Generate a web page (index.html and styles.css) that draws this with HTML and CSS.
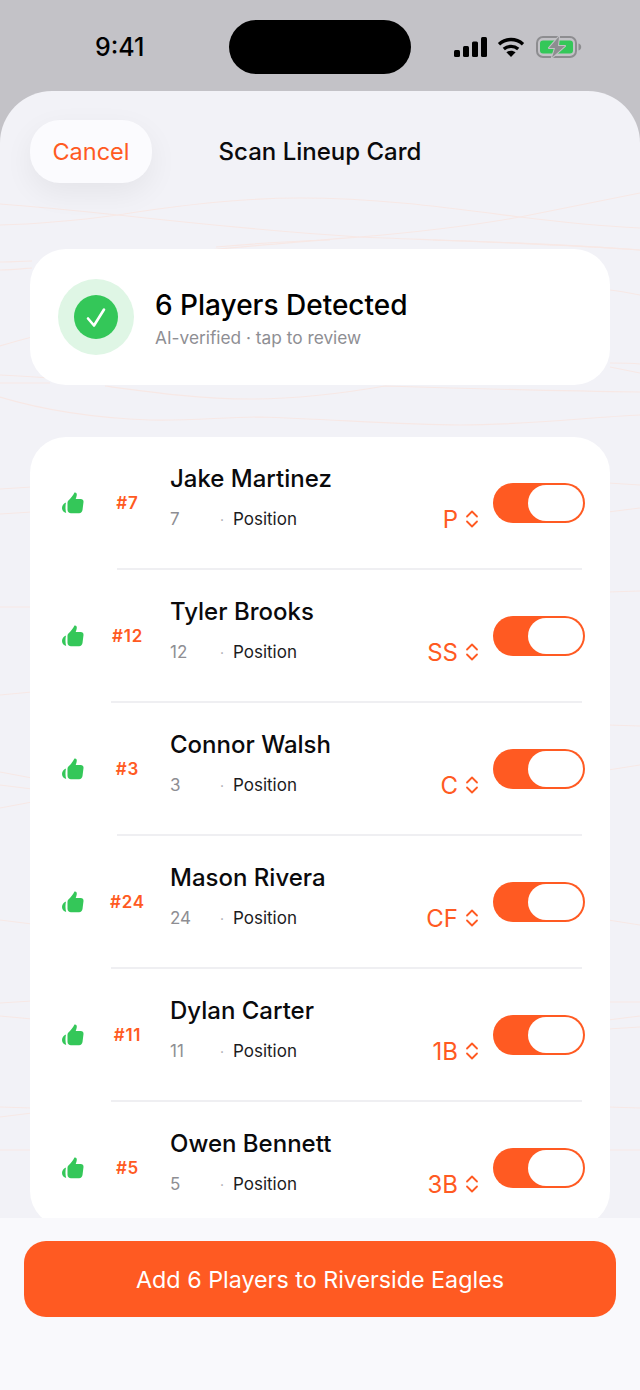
FILE: index.html
```html
<!DOCTYPE html>
<html lang="en">
<head>
<meta charset="utf-8">
<title>Scan Lineup Card</title>
<link rel="stylesheet" href="styles.css">
</head>
<body>
<svg width="0" height="0" class="defs">
  <defs>
    <symbol id="thumb" viewBox="0 0 22 22">
      <path fill="#34c759" d="M12.500.5c1.300-.4 2.300.6 2.300 2 0 1.600-.6 3.200-1.100 4.500h5c1.800 0 3 1.200 2.800 3l-1 8c-.3 2-1.500 3.200-3.400 3.200H9c-2 0-3.500-1.500-3.500-3.500v-7c0-1 .3-1.600.9-2.300C8.800 6.500 11 3.500 12.500.5z"/>
      <path fill="#34c759" d="M4 10.500C1 11.500 0 14 0 16c0 2.500 1.700 4.500 4.200 5C3.300 18 3.300 13.500 4 10.500z"/>
    </symbol>
    <symbol id="chev" viewBox="0 0 14 18">
      <path fill="none" stroke="#ff5a22" stroke-width="1.800" stroke-linecap="round" stroke-linejoin="round" d="M2 6.500 7 1.500l5 5M2 11.500l5 5 5-5"/>
    </symbol>
  </defs>
</svg>
<div class="status">
  <span class="time">9:41</span>
  <div class="island"></div>
  <div class="status-icons">
    <svg class="signal" width="33" height="20" viewBox="0 0 33 20">
      <rect x="0" y="13" width="6" height="7" rx="1.500"/>
      <rect x="9" y="9" width="6" height="11" rx="1.500"/>
      <rect x="18" y="4.500" width="6" height="15.500" rx="1.500"/>
      <rect x="27" y="0" width="6" height="20" rx="1.500"/>
    </svg>
    <svg class="wifi" width="28" height="20" viewBox="0 0 28 20">
      <path fill="none" stroke="#000" stroke-width="3.400" d="M2 7.200C9 1 19 1 26 7.200M6.800 12C11 8.500 17 8.500 21.200 12"/>
      <path d="M14 20l-4.600-4.800c2.700-2.100 6.500-2.100 9.200 0z"/>
    </svg>
    <svg class="battery" width="46" height="22" viewBox="0 0 46 22">
      <rect x="1" y="1" width="39" height="20" rx="6" fill="none" stroke="#8d8d90" stroke-width="2"/>
      <rect x="4" y="4.500" width="33" height="13" rx="3" fill="#34c759"/>
      <path d="M42.500 7.500c1.800.5 2.700 1.800 2.700 3.500s-.9 3-2.700 3.500z" fill="#8d8d90"/>
      <path d="M23 .5 13 12h6L16 21.500 29 10h-7z" fill="#8d8d90" stroke="#c3c2c7" stroke-width="2" stroke-linejoin="round" paint-order="stroke"/>
    </svg>
  </div>
</div>

<main class="sheet">
  <svg class="waves" width="640" height="1299" viewBox="0 91 640 1299" fill="none" stroke="#f7e8e5" stroke-width="1.200">
    <path d="M0 204C40 207 80 211 118 215C200 224 280 232 359 237C460 241 560 244 640 250"/>
    <path d="M0 225C40 224 80 220 118 215C180 205 240 198 300 198C380 198 450 208 520 217C560 222 600 226 640 228"/>
    <path d="M210 250C260 245 310 241 359 237C420 232 470 226 520 217C560 209 600 201 640 193"/>
    <path d="M216 247C250 244 290 241 330 240M433 240C500 242 570 245 640 250"/>
    <path d="M0 262C10 262 20 261 32 261M0 270C10 270 20 269 32 268"/>
    <path d="M0 346C10 343 20 340 32 337M610 290C620 291 630 293 640 295"/>
    <path d="M0 375C20 376 40 377 60 379M0 383C20 383 35 383 50 383"/>
    <path d="M610 363C620 363 630 363 640 364M610 367C620 369 630 371 640 373"/>
    <path d="M105 386C150 392 200 399 250 399C300 399 345 393 385 386C450 388 550 391 640 392"/>
    <path d="M0 397C50 412 100 418 150 420C190 421 225 417 260 417C330 419 400 425 460 425C530 425 590 417 640 415"/>
    <path d="M0 489L32 487M0 514L32 512M0 607L32 607M0 695L32 692M0 772L32 778M0 785L32 789M0 808L32 802M0 920L32 924M0 1003L32 1001M0 1016L32 1019M0 1107L32 1108M0 1117L32 1113M0 1150L32 1150"/>
    <path d="M608 483L640 485M608 512L640 508M608 592L640 591M608 725L640 726M608 770L640 765M608 920L640 925M608 1002L640 1002M608 1020L640 1016M608 1029L640 1027M608 1107L640 1108M608 1150L640 1150"/>
  </svg>

  <header class="nav">
    <div class="nav-side"><button class="cancel">Cancel</button></div>
    <h1 class="nav-title">Scan Lineup Card</h1>
    <div class="nav-side"></div>
  </header>

  <section class="summary">
    <div class="halo">
      <div class="check">
        <svg width="44" height="44" viewBox="0 0 44 44"><path fill="none" stroke="#fff" stroke-width="2.600" stroke-linecap="round" stroke-linejoin="round" d="M14 23.500l6 7 10-16"/></svg>
      </div>
    </div>
    <div class="summary-text">
      <div class="summary-title">6 Players Detected</div>
      <div class="summary-sub">AI-verified · tap to review</div>
    </div>
  </section>

  <section class="list">
    <div class="row">
      <svg class="thumb" width="22" height="22"><use href="#thumb"/></svg>
      <div class="jersey">#7</div>
      <div class="info">
        <div class="name">Jake Martinez</div>
        <div class="meta"><span class="num">7</span><span class="dot">·</span><span class="label">Position</span><span class="pos">P</span><svg class="chev" width="14" height="18"><use href="#chev"/></svg></div>
      </div>
      <div class="toggle"><div class="knob"></div></div>
    </div>
    <div class="divider one"></div>
    <div class="row">
      <svg class="thumb" width="22" height="22"><use href="#thumb"/></svg>
      <div class="jersey">#12</div>
      <div class="info">
        <div class="name">Tyler Brooks</div>
        <div class="meta"><span class="num">12</span><span class="dot">·</span><span class="label">Position</span><span class="pos">SS</span><svg class="chev" width="14" height="18"><use href="#chev"/></svg></div>
      </div>
      <div class="toggle"><div class="knob"></div></div>
    </div>
    <div class="divider two"></div>
    <div class="row">
      <svg class="thumb" width="22" height="22"><use href="#thumb"/></svg>
      <div class="jersey">#3</div>
      <div class="info">
        <div class="name">Connor Walsh</div>
        <div class="meta"><span class="num">3</span><span class="dot">·</span><span class="label">Position</span><span class="pos">C</span><svg class="chev" width="14" height="18"><use href="#chev"/></svg></div>
      </div>
      <div class="toggle"><div class="knob"></div></div>
    </div>
    <div class="divider one"></div>
    <div class="row">
      <svg class="thumb" width="22" height="22"><use href="#thumb"/></svg>
      <div class="jersey">#24</div>
      <div class="info">
        <div class="name">Mason Rivera</div>
        <div class="meta"><span class="num">24</span><span class="dot">·</span><span class="label">Position</span><span class="pos">CF</span><svg class="chev" width="14" height="18"><use href="#chev"/></svg></div>
      </div>
      <div class="toggle"><div class="knob"></div></div>
    </div>
    <div class="divider two"></div>
    <div class="row">
      <svg class="thumb" width="22" height="22"><use href="#thumb"/></svg>
      <div class="jersey">#11</div>
      <div class="info">
        <div class="name">Dylan Carter</div>
        <div class="meta"><span class="num">11</span><span class="dot">·</span><span class="label">Position</span><span class="pos">1B</span><svg class="chev" width="14" height="18"><use href="#chev"/></svg></div>
      </div>
      <div class="toggle"><div class="knob"></div></div>
    </div>
    <div class="divider two"></div>
    <div class="row">
      <svg class="thumb" width="22" height="22"><use href="#thumb"/></svg>
      <div class="jersey">#5</div>
      <div class="info">
        <div class="name">Owen Bennett</div>
        <div class="meta"><span class="num">5</span><span class="dot">·</span><span class="label">Position</span><span class="pos">3B</span><svg class="chev" width="14" height="18"><use href="#chev"/></svg></div>
      </div>
      <div class="toggle"><div class="knob"></div></div>
    </div>
  </section>

  <footer class="footer">
    <button class="add">Add 6 Players to Riverside Eagles</button>
  </footer>
</main>
</body>
</html>
```
FILE: styles.css
```css
* { box-sizing: border-box; }
html, body { margin: 0; padding: 0; }
body {
  width: 640px;
  height: 1390px;
  overflow: hidden;
  background: #c3c2c7;
  font-family: Inter, "Liberation Sans", sans-serif;
  color: #0a0a0c;
}
.defs { position: absolute; }

.status {
  height: 91px;
  display: flex;
  align-items: flex-start;
  padding: 20px 0 0 95px;
}
.time {
  width: 134px;
  height: 54px;
  line-height: 54px;
  font-size: 25px;
  font-weight: 500;
  color: #000;
}
.island { width: 182px; height: 54px; border-radius: 27px; background: #000; }
.status-icons {
  display: flex;
  align-items: center;
  height: 54px;
  margin-left: 43px;
  gap: 10px;
}
.wifi { margin-right: 1px; }

.sheet {
  position: relative;
  height: 1299px;
  overflow: hidden;
  border-radius: 52px 52px 0 0;
  background: #f2f2f7;
  padding: 29px 30px 0;
}
.waves { position: absolute; left: 0; top: 0; }

.nav {
  position: relative;
  display: grid;
  grid-template-columns: 1fr auto 1fr;
  align-items: center;
  height: 63px;
}
.cancel {
  display: block;
  width: 122px;
  height: 63px;
  padding: 0;
  border: 0;
  border-radius: 30px;
  background: #fbfbfe;
  box-shadow: 0 10px 30px rgba(0, 0, 0, 0.06);
  color: #ff5a22;
  font: 400 23.500px Inter, "Liberation Sans", sans-serif;
}
.nav-title { margin: 0; font-size: 24px; font-weight: 500; }

.summary {
  position: relative;
  display: flex;
  align-items: center;
  gap: 21px;
  height: 136px;
  margin-top: 66px;
  padding-left: 28px;
  background: #fff;
  border-radius: 36px;
}
.halo {
  width: 76px;
  height: 76px;
  display: flex;
  align-items: center;
  justify-content: center;
  border-radius: 50%;
  background: #dff6e5;
}
.check { width: 44px; height: 44px; border-radius: 50%; background: #34c759; }
.check svg { display: block; }
.summary-text { padding-top: 2px; }
.summary-title { font-size: 28px; font-weight: 500; line-height: 34px; color: #000; }
.summary-sub { margin-top: 5px; font-size: 17.300px; line-height: 22px; color: #8e8e93; }

.list {
  position: relative;
  height: 790px;
  margin-top: 52px;
  background: #fff;
  border-radius: 36px;
}
.row {
  display: flex;
  align-items: center;
  height: 131px;
  padding: 1px 25px 0 32px;
}
.thumb { flex: none; }
.jersey {
  flex: none;
  width: 86px;
  padding-left: 1px;
  text-align: center;
  font-size: 17px;
  font-weight: 600;
  letter-spacing: 0.8px;
  color: #ff5a22;
}
.info { flex: 1; min-width: 0; }
.name { font-size: 24px; font-weight: 500; line-height: 30px; margin-top: -10px; }
.meta {
  display: flex;
  align-items: center;
  height: 26px;
  margin-top: 12px;
  margin-right: 14px;
}
.num { width: 50px; font-size: 17px; color: #8e8e93; }
.dot { width: 13px; font-size: 14px; color: #a8a8ad; }
.label { flex: 1; font-size: 17px; color: #1c1c1e; }
.pos { font-size: 24px; color: #ff5a22; margin-right: 7px; }
.chev { flex: none; }

.toggle {
  flex: none;
  display: flex;
  justify-content: flex-end;
  align-items: center;
  width: 92px;
  height: 40px;
  padding-right: 2px;
  border-radius: 20px;
  background: #ff5a22;
}
.knob { width: 55px; height: 36px; border-radius: 18px; background: #fff; }

.divider { height: 2px; margin-right: 28px; background: #efeff2; }
.divider.one { margin-left: 87px; }
.divider.two { margin-left: 81px; }

.footer {
  position: absolute;
  left: 0;
  right: 0;
  bottom: 0;
  height: 172px;
  padding: 23px 24px 0;
  background: #f9f9fc;
}
.add {
  display: block;
  width: 100%;
  height: 76px;
  padding: 0;
  border: 0;
  border-radius: 22px;
  background: #ff5a22;
  color: #fff;
  font: 400 23.300px Inter, "Liberation Sans", sans-serif;
}
```
